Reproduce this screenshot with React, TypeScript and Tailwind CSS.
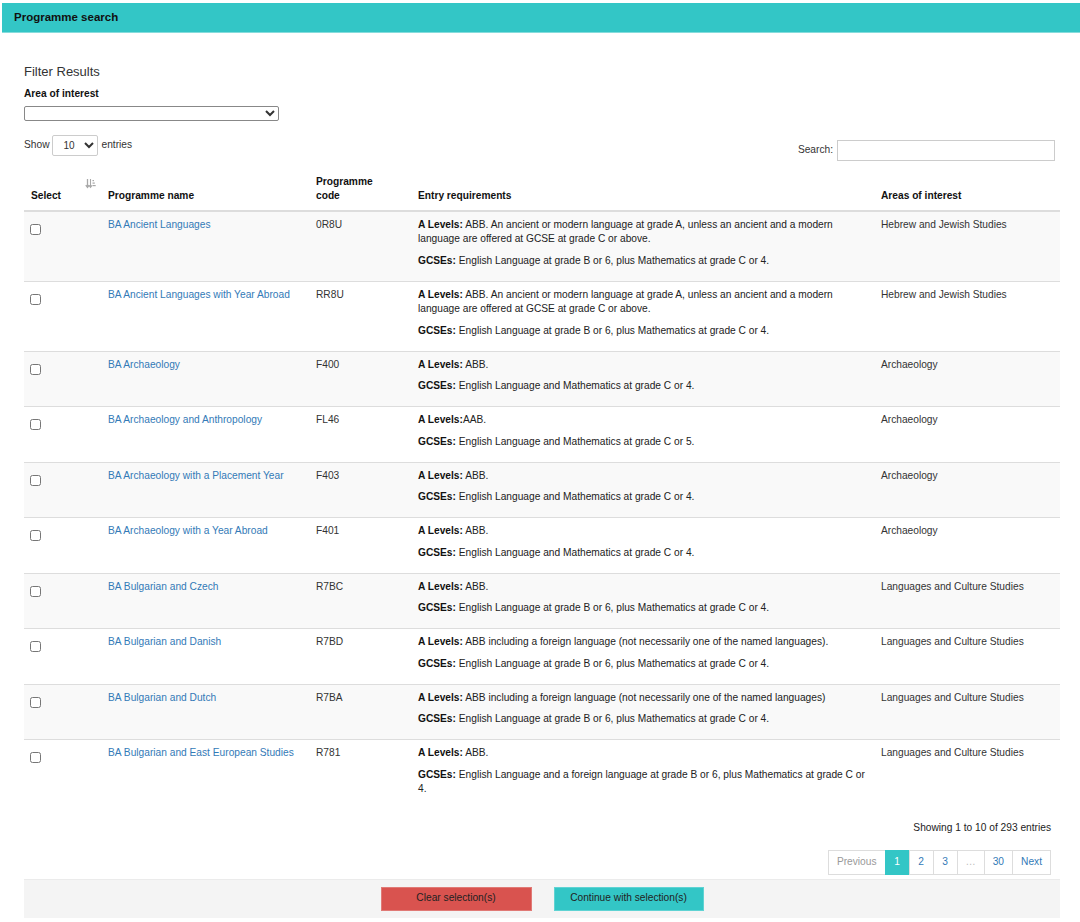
import React from "react";

type Row = {
  name: string;
  code: string;
  aLevels: string;
  tight?: boolean;
  gcse: string;
  area: string;
};

const rows: Row[] = [
  {
    name: "BA Ancient Languages",
    code: "0R8U",
    aLevels:
      "ABB. An ancient or modern language at grade A, unless an ancient and a modern language are offered at GCSE at grade C or above.",
    gcse: "English Language at grade B or 6, plus Mathematics at grade C or 4.",
    area: "Hebrew and Jewish Studies",
  },
  {
    name: "BA Ancient Languages with Year Abroad",
    code: "RR8U",
    aLevels:
      "ABB. An ancient or modern language at grade A, unless an ancient and a modern language are offered at GCSE at grade C or above.",
    gcse: "English Language at grade B or 6, plus Mathematics at grade C or 4.",
    area: "Hebrew and Jewish Studies",
  },
  {
    name: "BA Archaeology",
    code: "F400",
    aLevels: "ABB.",
    gcse: "English Language and Mathematics at grade C or 4.",
    area: "Archaeology",
  },
  {
    name: "BA Archaeology and Anthropology",
    code: "FL46",
    aLevels: "AAB.",
    tight: true,
    gcse: "English Language and Mathematics at grade C or 5.",
    area: "Archaeology",
  },
  {
    name: "BA Archaeology with a Placement Year",
    code: "F403",
    aLevels: "ABB.",
    gcse: "English Language and Mathematics at grade C or 4.",
    area: "Archaeology",
  },
  {
    name: "BA Archaeology with a Year Abroad",
    code: "F401",
    aLevels: "ABB.",
    gcse: "English Language and Mathematics at grade C or 4.",
    area: "Archaeology",
  },
  {
    name: "BA Bulgarian and Czech",
    code: "R7BC",
    aLevels: "ABB.",
    gcse: "English Language at grade B or 6, plus Mathematics at grade C or 4.",
    area: "Languages and Culture Studies",
  },
  {
    name: "BA Bulgarian and Danish",
    code: "R7BD",
    aLevels:
      "ABB including a foreign language (not necessarily one of the named languages).",
    gcse: "English Language at grade B or 6, plus Mathematics at grade C or 4.",
    area: "Languages and Culture Studies",
  },
  {
    name: "BA Bulgarian and Dutch",
    code: "R7BA",
    aLevels:
      "ABB including a foreign language (not necessarily one of the named languages)",
    gcse: "English Language at grade B or 6, plus Mathematics at grade C or 4.",
    area: "Languages and Culture Studies",
  },
  {
    name: "BA Bulgarian and East European Studies",
    code: "R781",
    aLevels: "ABB.",
    gcse:
      "English Language and a foreign language at grade B or 6, plus Mathematics at grade C or 4.",
    area: "Languages and Culture Studies",
  },
];

const SortIcon = () => (
  <svg width="11" height="11" viewBox="0 0 11 11" className="text-[#a8a8a8]">
    <path d="M2.5 1v8M0.8 7.2l1.7 2.3 1.7-2.3" stroke="currentColor" strokeWidth="1.3" fill="none" />
    <path d="M5.5 1v8M4 7.4l1.5 2 1.5-2" stroke="currentColor" strokeWidth="1.1" fill="none" />
    <rect x="7.5" y="2" width="1.5" height="1.2" fill="currentColor" />
    <rect x="7.5" y="4.5" width="2.3" height="1.2" fill="currentColor" />
    <rect x="7.5" y="7" width="3.2" height="1.2" fill="currentColor" />
  </svg>
);

const pages = [
  { label: "Previous", kind: "disabled" },
  { label: "1", kind: "active" },
  { label: "2", kind: "link" },
  { label: "3", kind: "link" },
  { label: "…", kind: "ellipsis" },
  { label: "30", kind: "link" },
  { label: "Next", kind: "link" },
];

export default function App() {
  return (
    <div className="min-h-[922px] bg-white font-['Liberation_Sans',Arial,sans-serif] text-[10.2px] leading-[14.5px] text-[#333]">
      {/* top bar */}
      <div className="ml-[2px] mt-[3px] flex h-[30px] items-center border-b border-[#86dcdc] bg-[#33c6c6] px-3 text-[11.5px] font-bold text-[#111]">
        Programme search
      </div>

      <div className="pl-6 pr-5">
        {/* filters */}
        <div className="mt-[31px] text-[13px] leading-[15px] text-[#333]">Filter Results</div>
        <div className="mt-2 font-bold text-[#111]">Area of interest</div>
        <select className="mt-[4px] block h-[15px] w-[255px] rounded-[2px] border border-[#888] bg-white text-[10px] leading-none">
          <option></option>
        </select>

        {/* show / search */}
        <div className="mt-[14px] flex items-start justify-between pr-[5px]">
          <div className="flex items-center gap-[3px]">
            <span>Show</span>
            <select className="h-[21px] w-[46px] rounded-[2px] border border-[#ccc] bg-white pl-[6px] text-[10px]">
              <option>10</option>
            </select>
            <span>entries</span>
          </div>
          <div className="mt-[5px] flex items-center gap-[4px]">
            <span>Search:</span>
            <input className="h-[21px] w-[218px] border border-[#ccc] bg-white" />
          </div>
        </div>

        {/* table */}
        <table className="mt-[14px] w-[1036px] table-fixed border-collapse">
          <colgroup>
            <col className="w-[77px]" />
            <col className="w-[208px]" />
            <col className="w-[102px]" />
            <col className="w-[463px]" />
            <col className="w-[186px]" />
          </colgroup>
          <thead>
            <tr className="border-b-2 border-[#ddd] text-[#111]">
              <th className="relative px-[7px] pb-[6px] pt-[6px] text-left align-bottom font-bold">
                Select
                <span className="absolute right-[5px] top-[3px]">
                  <SortIcon />
                </span>
              </th>
              <th className="px-[7px] pb-[6px] text-left align-bottom font-bold">Programme name</th>
              <th className="px-[7px] pb-[6px] text-left align-bottom font-bold">
                Programme
                <br />
                code
              </th>
              <th className="px-[7px] pb-[6px] text-left align-bottom font-bold">Entry requirements</th>
              <th className="px-[7px] pb-[6px] text-left align-bottom font-bold">Areas of interest</th>
            </tr>
          </thead>
          <tbody>
            {rows.map((r, i) => (
              <tr
                key={r.code}
                className={`border-t border-[#ddd] ${i % 2 === 0 ? "bg-[#f9f9f9]" : "bg-white"}`}
              >
                <td className="px-[6px] pb-[5.5px] pt-[6px] align-top">
                  <input type="checkbox" className="m-0 mt-[6px] block h-[11px] w-[11px]" />
                </td>
                <td className="px-[7px] pb-[5.5px] pt-[6px] align-top">
                  <a href="#" className="text-[#337ab7]">
                    {r.name}
                  </a>
                </td>
                <td className="px-[7px] pb-[5.5px] pt-[6px] align-top">{r.code}</td>
                <td className="px-[7px] pb-[5.5px] pt-[6px] align-top">
                  <p className="mb-[7px] text-[#222]">
                    <b className="text-[#111]">A Levels:</b>
                    {r.tight ? "" : " "}
                    {r.aLevels}
                  </p>
                  <p className="mb-[7px] text-[#222]">
                    <b className="text-[#111]">GCSEs:</b> {r.gcse}
                  </p>
                </td>
                <td className="px-[7px] pb-[5.5px] pt-[6px] align-top">{r.area}</td>
              </tr>
            ))}
          </tbody>
        </table>

        {/* info + pagination */}
        <div className="mt-[12px] pr-[9px] text-right text-[#222]">Showing 1 to 10 of 293 entries</div>
        <div className="mt-[14px] flex justify-end pr-[9px]">
          {pages.map((p, i) => (
            <span
              key={p.label}
              className={`flex h-[25px] min-w-[25px] items-center justify-center border px-2 ${
                i > 0 ? "-ml-px" : ""
              } ${
                p.kind === "active"
                  ? "border-[#33c6c6] bg-[#33c6c6] text-white"
                  : p.kind === "disabled"
                  ? "border-[#ddd] text-[#999]"
                  : p.kind === "ellipsis"
                  ? "border-[#ddd] text-[#bbb]"
                  : "border-[#ddd] text-[#337ab7]"
              }`}
            >
              {p.label}
            </span>
          ))}
        </div>

        {/* action bar */}
        <div className="mt-[4px] flex h-[39px] items-center justify-center gap-[22px] border-t border-[#ebebeb] bg-[#f4f4f4]">
          <button className="h-[24px] w-[151px] border border-[#e07a76] bg-[#d9534f] text-[10.2px] text-[#222]">
            Clear selection(s)
          </button>
          <button className="h-[24px] w-[150px] border border-[#5fd3d3] bg-[#33c6c6] text-[10.2px] text-[#222]">
            Continue with selection(s)
          </button>
        </div>
      </div>
    </div>
  );
}
